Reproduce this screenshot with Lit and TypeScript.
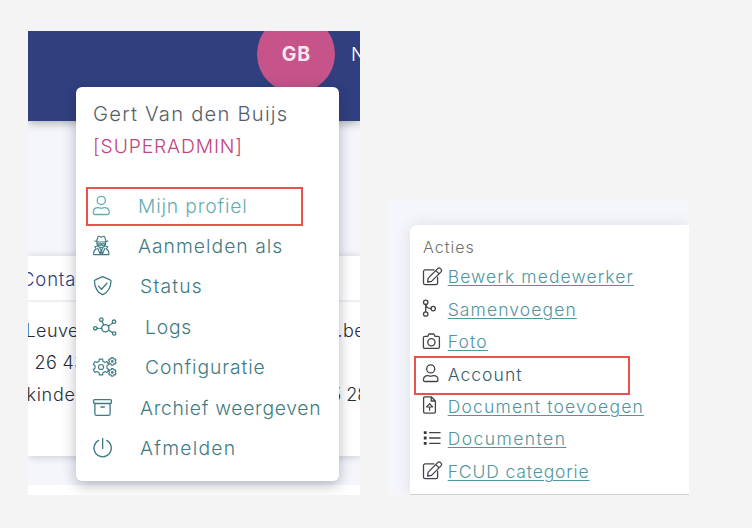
import { LitElement, html, svg, css } from "lit";
import { styleMap } from "lit/directives/style-map.js";

const gear = (cx: number, cy: number, outer: number, inner: number, teeth: number) => {
  const pts: string[] = [];
  const step = (Math.PI * 2) / teeth;
  for (let i = 0; i < teeth; i++) {
    const a = i * step - Math.PI / 2;
    for (const [d, r] of [[-0.3, inner], [-0.2, outer], [0.2, outer], [0.3, inner]]) {
      const t = a + d * step;
      pts.push(`${(cx + Math.cos(t) * r).toFixed(2)} ${(cy + Math.sin(t) * r).toFixed(2)}`);
    }
  }
  return `M${pts.join("L")}Z`;
};

const edit = svg`<path d="M12 3.9H3.100a1.600 1.600 0 0 0-1.600 1.600v11.500a1.600 1.600 0 0 0 1.600 1.600H14a1.600 1.600 0 0 0 1.600-1.600V11.500"/><path d="M5.600 16l.6-3.900 9.500-9.500a2 2 0 0 1 2.800 0l.5.5a2 2 0 0 1 0 2.800l-9.500 9.500zM13.800 4.600l3.300 3.300"/>`;

const icons: Record<string, unknown> = {
  user: svg`<circle cx="9.300" cy="6.400" r="4.100"/><path d="M6.100 13.700c1.200 0 1.700.6 3.200.6s2-.6 3.200-.6c3 0 4.700 2 4.700 4.600v.8c0 .8-.6 1.400-1.400 1.400h-13c-.8 0-1.400-.6-1.400-1.400v-.8c0-2.600 1.700-4.600 4.700-4.600z"/>`,
  spy: svg`<g class="fine"><path d="M2.700 6.900c2 1.500 11.200 1.500 13.200 0M4.700 7l1-3.600c.3-1 1-1.200 1.800-.9l1.800.6 1.800-.6c.8-.3 1.500-.1 1.800.9l1 3.600M4.800 8.500c.2 3 1.700 5 4.500 5s4.300-2 4.500-5"/><path d="M5.500 9.800h3l.8.5.8-.5h3l-.7 1.900h-1.700L9.300 10.600l-1.400 1.100H6.200z"/><path d="M4.800 12.200l-2 .5 1.500 2.300c-1.700.8-2.600 2-2.600 4v1.600h15.200V19c0-2-.9-3.200-2.600-4l1.500-2.300-2-.5M5.700 14.300l2.700 6.200.7-4.400-1.200-1.700M12.900 14.300l-2.700 6.200-.7-4.400 1.200-1.700"/></g>`,
  shield: svg`<path d="M10.700 2.700l7.400 3.100c.6.2.9.7.9 1.300 0 6.500-3.600 11.500-7.700 13.300a1.500 1.500 0 0 1-1.200 0C6 18.700 2.400 13.600 2.400 7.100c0-.6.3-1.100.9-1.300z"/><path d="M6.500 12.200l3 3 5.500-6"/>`,
  nodes: svg`<circle cx="13.300" cy="13.300" r="3.600"/><circle cx="9.300" cy="4.700" r="1.800"/><circle cx="22" cy="6.700" r="1.700"/><circle cx="3.300" cy="13.300" r="1.700"/><circle cx="22.200" cy="18.500" r="1.700"/><path d="M10.100 6.400l1.600 3.600M16.400 11.200l1.800-1.400M19.300 8.900l1.300-1M5.200 13.300h1.500M8 13.300h1.700M16.600 15.200l4 2.400"/>`,
  gears: svg`<g class="fine"><path d="${gear(9, 12, 8.1, 6.1, 6)}"/><circle cx="9" cy="12" r="2.500"/><path d="${gear(20.3, 6.4, 3.9, 3.1, 6)}"/><circle cx="20.300" cy="6.400" r=".8"/><path d="${gear(20.3, 17.4, 3.9, 3.1, 6)}"/><circle cx="20.300" cy="17.400" r=".8"/></g>`,
  archive: svg`<rect x="1.600" y="3.600" width="17.800" height="3.900" rx="1"/><path d="M2.900 7.500v10.400c0 .9.600 1.500 1.500 1.500h12.200c.9 0 1.500-.6 1.500-1.500V7.500M8.900 11h3.400"/>`,
  power: svg`<path d="M6.600 4.400a8.700 8.700 0 1 0 8.100 0M10.650 2.500v9.900"/>`,
  edit,
  merge: svg`<circle cx="3.700" cy="4.300" r="2.200"/><circle cx="3.700" cy="16" r="2.200"/><circle cx="11.200" cy="10.600" r="2.200"/><path d="M3.700 6.500v7.300M3.900 6.500c.4 2.800 2 4.100 5.100 4.100"/>`,
  camera: svg`<path d="M2.800 5.400h2.900l.8-1.700c.2-.5.6-.7 1.100-.7h3.600c.5 0 .9.200 1.100.7l.8 1.700h2.900c.8 0 1.400.6 1.400 1.400V16c0 .8-.6 1.400-1.400 1.400H2.800c-.8 0-1.400-.6-1.400-1.400V6.800c0-.8.6-1.400 1.400-1.400z"/><circle cx="9.400" cy="11.300" r="3.600"/>`,
  account: svg`<circle cx="8.700" cy="5.900" r="4"/><path d="M5.700 12.700c1.100 0 1.600.5 3 .5s1.900-.5 3-.5c2.700 0 4.200 1.600 4.200 3.900v.6c0 .8-.5 1.300-1.300 1.300H2.800c-.8 0-1.300-.5-1.300-1.300v-.6c0-2.300 1.500-3.900 4.200-3.900z"/>`,
  upload: svg`<path d="M9.200 1.800H2.900c-.8 0-1.300.5-1.300 1.300v13.700c0 .8.500 1.300 1.300 1.300h9.200c.8 0 1.300-.5 1.300-1.300V6zM9.200 1.800V6h4.200"/><path class="thin" d="M7.600 15.300v-3.300M4.600 12l3-3.300 3 3.300z"/>`,
  list: svg`<path d="M7.600 4.700h10.500M7.600 10h10.500M7.600 15.300h10.500"/><path class="solid" d="M1.800 3.300h2.800v2.800H1.800zM1.800 8.600h2.800v2.800H1.800zM1.800 13.900h2.800v2.800H1.800z"/>`,
};

type Item = { icon: string; label: string; spacing: number; width?: number; on?: boolean };

const menu: Item[] = [
  { icon: "user", label: "Mijn profiel", spacing: 0.83, width: 18, on: true },
  { icon: "spy", label: "Aanmelden als", spacing: 1.02, width: 18 },
  { icon: "shield", label: "Status", spacing: 1.2, width: 20 },
  { icon: "nodes", label: "Logs", spacing: 0.8, width: 25 },
  { icon: "gears", label: "Configuratie", spacing: 0.9, width: 25 },
  { icon: "archive", label: "Archief weergeven", spacing: 0.72, width: 20 },
  { icon: "power", label: "Afmelden", spacing: 1.26, width: 20 },
];

const actions: Item[] = [
  { icon: "edit", label: "Bewerk medewerker", spacing: 1.1 },
  { icon: "merge", label: "Samenvoegen", spacing: 1.1 },
  { icon: "camera", label: "Foto", spacing: 1.2 },
  { icon: "account", label: "Account", spacing: 1.05, on: true },
  { icon: "upload", label: "Document toevoegen", spacing: 1.18 },
  { icon: "list", label: "Documenten", spacing: 1.45 },
  { icon: "edit", label: "FCUD categorie", spacing: 0.86 },
];

const spaced = (n: number) => styleMap({ letterSpacing: `${n}px` });

class ProfilePanel extends LitElement {
  static styles = css`
    :host { display: block; position: relative; overflow: hidden; background: #f4f6fb; }
    .bar { position: relative; height: 90px; background: #303f80; box-shadow: 0 2px 9px rgba(0, 0, 0, 0.3); }
    .avatar {
      position: absolute; left: 229.300px; top: -16px; width: 78px; height: 78px; border-radius: 50%;
      display: grid; place-items: center; background: #c65389; color: #fbe6f0; font-size: 19.500px; font-weight: 700; letter-spacing: 0.900px;
    }
    .name { position: absolute; left: 323px; top: 8px; line-height: 32px; font-size: 19px; color: #fff; }
    .card { margin-top: 135.500px; height: 200px; background: #fff; box-shadow: 0 1px 8px rgba(30, 35, 60, 0.2); font-size: 18px; color: #282e38; }
    .title { height: 44px; line-height: 46px; font-size: 18.500px; letter-spacing: 0.850px; color: #303f80; text-indent: -7px; box-shadow: 0 2px 1px #eff0f3; }
    .lines { padding-top: 14.800px; }
    .line { display: grid; grid-template-columns: 310px 1fr; line-height: 32px; white-space: pre; }
    .line:nth-child(1) { text-indent: -2.500px; letter-spacing: 0.400px; }
    .line:nth-child(1) .end { text-indent: -0.500px; }
    .line:nth-child(2) { text-indent: -9.500px; letter-spacing: 0.400px; }
    .line:nth-child(3) { text-indent: -1.500px; letter-spacing: 0.700px; }
    .line:nth-child(3) .end { text-indent: -7.500px; letter-spacing: 0; }
    .next { margin-top: 28.500px; height: 20px; background: #fff; }
    .menu {
      position: absolute; left: 48px; top: 56.500px; width: 262.500px; height: 393.500px; box-sizing: border-box;
      padding: 11px 16px 0; border-radius: 6px; background: #fff; box-shadow: 0 4px 14px rgba(20, 25, 50, 0.3);
      font-size: 19.300px; white-space: nowrap;
    }
    .who, .role { margin-left: 1px; line-height: 32px; }
    .who { color: #56606b; font-size: 20.200px; }
    .role { color: #c2457f; }
    .items { margin-top: 23.300px; }
    .item { display: flex; align-items: center; gap: 28px; height: 40.450px; color: #3f7b83; }
    .item.on { color: #66abb5; }
    svg { height: 24px; flex: none; overflow: visible; fill: none; stroke: currentColor; stroke-width: 1.300; stroke-linejoin: round; stroke-linecap: round; }
    .fine { stroke-width: 1.150; }
    .mark { position: absolute; left: 58px; top: 156.500px; width: 217px; height: 39px; box-sizing: border-box; border: 2px solid #e9524c; }
  `;
  render() {
    return html`
      <div class="bar"><div class="avatar">GB</div><div class="name">N</div></div>
      <div class="card">
        <div class="title">Conta</div>
        <div class="lines">
          <div class="line"><span>Leuve</span><span class="end">.be</span></div>
          <div class="line"><span>7 26 43</span></div>
          <div class="line"><span>kinde</span><span class="end">5 28</span></div>
        </div>
      </div>
      <div class="next"></div>
      <div class="menu">
        <div class="who" style=${spaced(1.22)}>Gert Van den Buijs</div>
        <div class="role" style=${spaced(0.87)}>[SUPERADMIN]</div>
        <div class="items">
          ${menu.map((m) => html`<div class="item ${m.on ? "on" : ""}">
            <svg width=${m.width!}>${icons[m.icon]}</svg><span style=${spaced(m.spacing)}>${m.label}</span>
          </div>`)}
        </div>
      </div>
      <div class="mark"></div>`;
  }
}
customElements.define("profile-panel", ProfilePanel);

class ActionsPanel extends LitElement {
  static styles = css`
    :host { display: block; position: relative; overflow: hidden; background: #f5f6fb; }
    .card {
      margin: 24.500px 0 0 22px; height: 270.500px; box-sizing: border-box; padding: 8.200px 12px 0; background: #fff;
      border-radius: 7px 0 0 0; border-bottom: 1px solid #cfcfd1; box-shadow: 0 0 16px rgba(40, 50, 90, 0.11); font-size: 17.500px; white-space: nowrap;
    }
    .head { margin-left: 1px; line-height: 28px; font-size: 16px; letter-spacing: 1px; color: #707070; }
    .item { display: flex; align-items: center; height: 32.400px; gap: 3.700px; color: #4f969f; }
    .item span { text-decoration: underline; text-decoration-thickness: 1.300px; text-underline-offset: 2.300px; }
    .item.on { color: #355b6d; }
    .item.on span { text-decoration: none; }
    svg { width: 22px; height: 22px; flex: none; overflow: visible; fill: none; stroke: #40444b; stroke-width: 1.300; stroke-linejoin: round; stroke-linecap: round; }
    .solid { fill: #33373d; stroke: none; }
    .thin { stroke-width: 1.200; }
    .mark { position: absolute; left: 26px; top: 156px; width: 216px; height: 39px; box-sizing: border-box; border: 2px solid #e9524c; }
  `;
  render() {
    return html`
      <div class="card">
        <div class="head">Acties</div>
        ${actions.map((a) => html`<div class="item ${a.on ? "on" : ""}">
          <svg>${icons[a.icon]}</svg><span style=${spaced(a.spacing)}>${a.label}</span>
        </div>`)}
      </div>
      <div class="mark"></div>`;
  }
}
customElements.define("actions-panel", ActionsPanel);

class AppRoot extends LitElement {
  static styles = css`
    :host {
      display: flex; align-items: flex-start; gap: 28.500px; box-sizing: border-box; width: 752px; height: 528px;
      padding: 30.500px 0 0 28px; background: #f4f4f4; font-family: Inter, "Open Sans", sans-serif; font-weight: 300; overflow: hidden;
    }
    profile-panel { width: 331.500px; height: 464px; flex: none; }
    actions-panel { width: 301px; height: 295px; flex: none; margin-top: 169.500px; }
  `;
  render() {
    return html`<profile-panel></profile-panel><actions-panel></actions-panel>`;
  }
}
customElements.define("app-root", AppRoot);
